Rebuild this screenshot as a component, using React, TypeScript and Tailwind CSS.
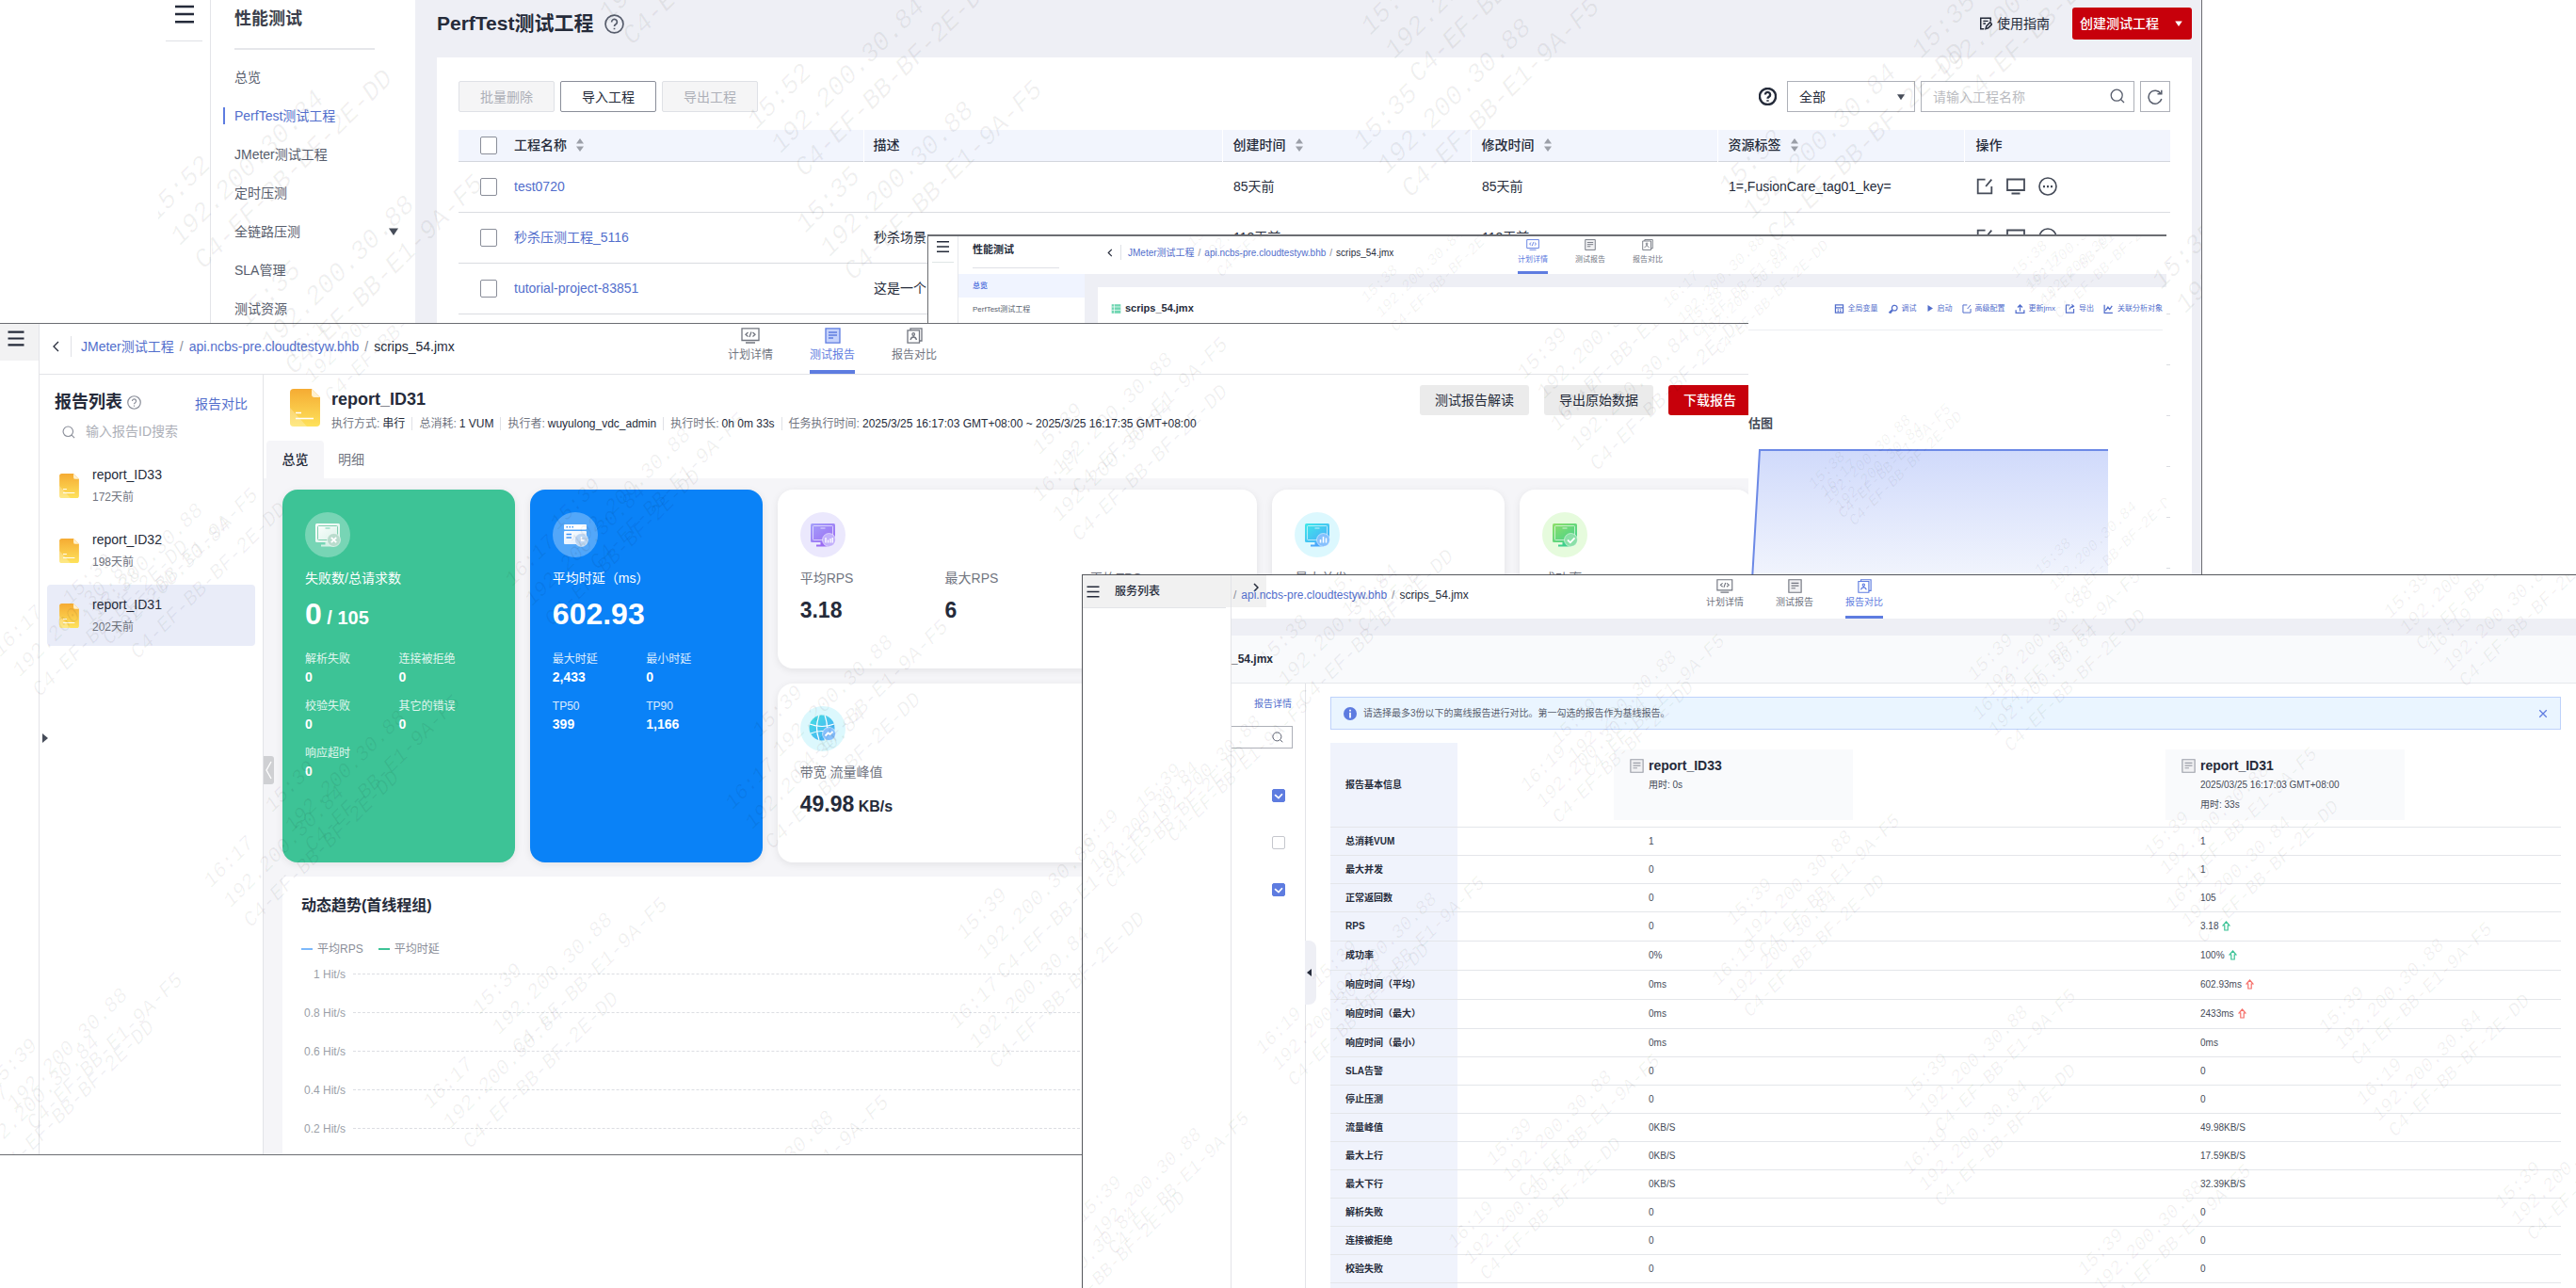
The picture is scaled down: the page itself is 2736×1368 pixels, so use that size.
import React from "react";

const MAC_A = "C4-EF-BB-E1-9A-F5";
const MAC_B = "C4-EF-BB-BF-2E-DD";
const IP_A = "192.200.30.88";
const IP_B = "192.200.30.84";

type Mark = { x: number; y: number; t: string; b?: boolean };

function Watermarks({ marks, size }: { marks: Mark[]; size: "sm" | "md" | "lg" | "xl" }) {
  const cls = {
    sm: "text-[16px] leading-[22px]",
    md: "text-[20px] leading-[24px]",
    lg: "text-[22px] leading-[30px]",
    xl: "text-[28px] leading-[36px]",
  }[size];
  return (
    <div aria-hidden="true" className="pointer-events-none absolute inset-0 z-20 overflow-hidden select-none">
      {marks.map((m, i) => (
        <div
          key={i}
          className={`absolute origin-top-left -rotate-45 font-['Liberation_Mono',monospace] whitespace-nowrap text-black/6 italic ${cls}`}
          style={{ left: m.x, top: m.y }}
        >
          <div>{m.t}</div>
          <div>{m.b ? IP_B : IP_A}</div>
          <div>{m.b ? MAC_B : MAC_A}</div>
        </div>
      ))}
    </div>
  );
}

/* ---------- icons ---------- */

function Svg({ className, children, box = "0 0 16 16", label }: { className: string; children: React.ReactNode; box?: string; label?: string }) {
  return (
    <svg viewBox={box} className={`shrink-0 ${className}`} fill="none" stroke="currentColor" strokeWidth="1.3" aria-label={label} aria-hidden={label ? undefined : true}>
      {children}
    </svg>
  );
}
const Burger = ({ className }: { className: string }) => (
  <Svg className={className}>
    <path d="M0 1.5H16M0 8H16M0 14.5H16" strokeWidth="2" />
  </Svg>
);
const Help = ({ className }: { className: string }) => (
  <Svg className={className}>
    <circle cx="8" cy="8" r="7.2" />
    <path d="M5.8 6.4a2.2 2.2 0 1 1 3.4 1.8c-.8.5-1.2.8-1.2 1.7M8 11.2v1.2" />
  </Svg>
);
const SearchI = ({ className }: { className: string }) => (
  <Svg className={className}>
    <circle cx="7.2" cy="7.2" r="6" />
    <path d="M11.5 11.5L15 15" />
  </Svg>
);
const Down = ({ className }: { className: string }) => (
  <Svg className={className} box="0 0 10 8">
    <path d="M0 0.5H10L5 8Z" fill="currentColor" stroke="none" />
  </Svg>
);
const Sort = () => (
  <Svg className="h-[14px] w-2 text-[#9b9fa8]" box="0 0 8 14">
    <path d="M4 0L8 5.5H0ZM4 14L8 8.5H0Z" fill="currentColor" stroke="none" />
  </Svg>
);
const EditI = ({ className }: { className: string }) => (
  <Svg className={className}>
    <path d="M8.5 1.5H1.5V14.5H14.5V8M9 8L14.5 1.5" strokeWidth="1.6" />
  </Svg>
);
const MonitorI = ({ className }: { className: string }) => (
  <Svg className={className} box="0 0 20 17">
    <path d="M1 1H19V12.5H1ZM5.5 16H14.5" strokeWidth="1.8" />
  </Svg>
);
const MoreI = ({ className }: { className: string }) => (
  <Svg className={className}>
    <circle cx="8" cy="8" r="7.2" />
    <path d="M4 8h1.6M7.2 8h1.6M10.4 8H12" strokeWidth="1.8" />
  </Svg>
);
const CodeI = ({ className }: { className: string }) => (
  <Svg className={className} box="0 0 20 17">
    <path d="M1 .8H19V13.5H1ZM5 16H15M7.5 5L5 7.2L7.5 9.4M12.5 5L15 7.2L12.5 9.4M11 4.5L9 10" />
  </Svg>
);
const DocI = ({ className, fill }: { className: string; fill?: boolean }) => (
  <Svg className={className} box="0 0 17 17">
    <path d="M1 .8H16V16.2H1Z" fill={fill ? "#c5d2fb" : "#f1f1f3"} />
    <path d="M4 5H13M4 8H13M4 11H9" />
  </Svg>
);
const CompareI = ({ className }: { className: string }) => (
  <Svg className={className} box="0 0 17 17">
    <path d="M4 2.8V.8H16V14H14M1 2.8H13.5V16.2H1Z" />
    <circle cx="7.2" cy="7" r="1.3" />
    <path d="M7.2 8.5V10M4 13C4.5 11 6 10 7.2 10S10 11 10.5 13" />
  </Svg>
);
const UpArrow = ({ className }: { className: string }) => (
  <Svg className={className} box="0 0 9 11">
    <path d="M4.5 1L8 5H6.2V10H2.8V5H1Z" strokeWidth="1.2" />
  </Svg>
);
const FileI = ({ className, id }: { className: string; id: string }) => (
  <Svg className={className} box="0 0 32 40">
    <defs>
      <linearGradient id={id} x1="0" y1="0" x2="0" y2="1">
        <stop offset="0" stopColor="#f5ab33" />
        <stop offset="1" stopColor="#fee25b" />
      </linearGradient>
    </defs>
    <path d="M4 0H23L32 9V36Q32 40 28 40H4Q0 40 0 36V4Q0 0 4 0Z" fill={`url(#${id})`} stroke="none" />
    <path d="M0 20L18 40H4Q0 40 0 36Z" fill="#fff" opacity=".25" stroke="none" />
    <path d="M23 0L32 9H26Q23 9 23 6Z" fill="#fff1cf" stroke="none" />
    <path d="M6 25.500H12M6 31.500H25" stroke="#fff" strokeWidth="1.500" />
  </Svg>
);

type Kind = "fail" | "time" | "rps" | "net" | "max" | "ok";
const circleBg: Record<Kind, string> = {
  fail: "bg-white/30",
  time: "bg-white/30",
  rps: "bg-[#ebe8fd]",
  net: "bg-[#dcf8fd]",
  max: "bg-[#dcf8fe]",
  ok: "bg-[#e6fbdd]",
};
const tones: Record<Kind, [string, string, string]> = {
  fail: ["#ffffff", "#d5f1e6", "#b9dccd"],
  time: ["#ffffff", "#dcecff", "#bcd6f3"],
  rps: ["#a5a0fb", "#9a6bf2", "#c2b0fb"],
  net: ["#45e0e0", "#4aa8fb", "#86c0fd"],
  max: ["#3fe8e8", "#4aa8fb", "#86c0fd"],
  ok: ["#8fe06a", "#3fcf8c", "#8be0a8"],
};
function CircleIcon({ kind }: { kind: Kind }) {
  const [a, b, c] = tones[kind];
  const id = `tone-${kind}`;
  return (
    <div className={`flex size-12 shrink-0 items-center justify-center rounded-full ${circleBg[kind]}`}>
      <svg viewBox="0 0 30 30" className="size-[30px]" fill="none" aria-hidden="true">
        <defs>
          <linearGradient id={id} x1="0" y1="0" x2="1" y2="1">
            <stop offset="0" stopColor={a} />
            <stop offset="1" stopColor={b} />
          </linearGradient>
        </defs>
        {kind === "net" && (
          <>
            <circle cx="14" cy="14" r="13.500" fill={`url(#${id})`} />
            <path d="M1 10Q14 15 27 10M2 20Q14 15 26 20M11 1Q6 14 11 27M17 1Q22 14 17 27" stroke="#fff" strokeWidth="1.200" />
          </>
        )}
        {kind === "time" && (
          <>
            <rect x="3" y="4" width="24" height="5.500" rx="1" fill="#fff" />
            <path d="M5.500 6.800h1.500M8.500 6.800H10M11.500 6.800H13" stroke="#3f95f8" strokeWidth="1.500" />
            <rect x="3" y="11" width="24" height="14" rx="1" fill={`url(#${id})`} />
            <path d="M5.500 14.500H11M5.500 18H11" stroke="#3f95f8" strokeWidth="1.300" />
          </>
        )}
        {kind !== "net" && kind !== "time" && (
          <>
            <rect x="2" y="3" width="26" height="20" rx="1.500" fill={`url(#${id})`} />
            <rect x="4.500" y="5.500" width="21" height="15" rx="1" stroke={kind === "fail" ? "#7fcfae" : "#fff"} strokeOpacity={kind === "fail" ? 1 : 0.6} />
            <path d="M12.500 8H17.500" stroke={kind === "fail" ? "#3dc396" : "#fff"} opacity=".7" />
            <path d="M12.500 23h5v2.500H22v2H8v-2h4.500Z" fill={b} />
          </>
        )}
        <circle cx="21.500" cy="20.500" r="7" fill={c} stroke="#fff" strokeOpacity=".5" />
        {kind === "fail" && <path d="M18.800 17.800l5.400 5.400M24.200 17.800l-5.400 5.400" stroke="#fff" strokeWidth="1.800" />}
        {kind === "time" && <path d="M21.500 17v4h3" stroke="#fff" strokeWidth="1.600" />}
        {kind === "rps" && <path d="M18 18v5.500M20.500 20.500v3M23 19v4.500M25.200 18v5.500" stroke="#fff" strokeWidth="1.300" />}
        {kind === "max" && <path d="M18.500 20v3.500M21.500 17v6.500M24.500 18.500v5" stroke="#fff" strokeWidth="1.500" />}
        {kind === "net" && <path d="M17.500 22.500l3-3 2 1.500 3-3" stroke="#fff" strokeWidth="1.800" />}
        {kind === "ok" && <path d="M18 20.500l2.800 2.800 4.700-5" stroke="#fff" strokeWidth="1.800" />}
      </svg>
    </div>
  );
}

/* ---------- shared: breadcrumb and centre tabs ---------- */

function Crumbs({ className, first = true }: { className: string; first?: boolean }) {
  return (
    <nav aria-label="面包屑" className={`flex items-center whitespace-nowrap text-[#252b3a] ${className}`}>
      {first && <a href="#jmeter" className="text-[#526ecc]">JMeter测试工程</a>}
      <span className="text-[#8a8e99]">/</span>
      <a href="#api" className="text-[#526ecc]">api.ncbs-pre.cloudtestyw.bhb</a>
      <span className="text-[#8a8e99]">/</span>
      <span>scrips_54.jmx</span>
    </nav>
  );
}

function PlanTabs({ active, size }: { active: number; size: "s" | "m" | "l" }) {
  const list = ["计划详情", "测试报告", "报告对比"];
  const s = {
    s: { nav: "gap-[29px]", text: "w-8 text-[8px] leading-[14px]", icon: "h-3", pad: "pt-[3px] gap-[3px]", bar: "h-[3px]" },
    m: { nav: "gap-[34px]", text: "w-10 text-[10px] leading-[16px]", icon: "h-[15px]", pad: "pt-1 gap-[2px]", bar: "h-[3px]" },
    l: { nav: "gap-[39px]", text: "w-12 text-xs leading-[18px]", icon: "h-[17px]", pad: "pt-1 gap-[3px]", bar: "h-[4px]" },
  }[size];
  return (
    <div role="tablist" className={`flex self-stretch ${s.nav}`}>
      {list.map((t, i) => {
        const on = i === active;
        return (
          <button key={t} role="tab" aria-selected={on} className={`flex flex-col items-center whitespace-nowrap ${s.text} ${s.pad} ${on ? "text-[#5e7ce0]" : "text-[#71757f]"}`}>
            {i === 0 && <CodeI className={s.icon} />}
            {i === 1 && <DocI className={s.icon} fill={on} />}
            {i === 2 && <CompareI className={s.icon} />}
            <span>{t}</span>
            <span className={`mt-auto w-full ${s.bar} ${on ? "bg-[#5e7ce0]" : ""}`} />
          </button>
        );
      })}
    </div>
  );
}

/* ---------- project list window ---------- */

const sideItems = ["总览", "PerfTest测试工程", "JMeter测试工程", "定时压测", "全链路压测", "SLA管理", "测试资源"];
const projects = [
  { name: "test0720", desc: "", t: "85天前", tag: "1=,FusionCare_tag01_key=" },
  { name: "秒杀压测工程_5116", desc: "秒杀场景", t: "113天前", tag: "" },
  { name: "tutorial-project-83851", desc: "这是一个", t: "113天前", tag: "" },
  null, null, null, null, null,
];

function ProjectWindow() {
  return (
    <section className="absolute top-0 right-[397px] left-[168px] flex overflow-hidden border-r border-[#6b6d72] bg-white text-sm text-[#252b3a]">
      <div className="w-14 shrink-0 border-r border-[#e3e4e8]">
        <div className="mx-2 flex h-11 items-start justify-center border-b border-[#dfe1e6] pt-[5px]">
          <button aria-label="菜单"><Burger className="h-5 w-5 text-[#252b3a]" /></button>
        </div>
      </div>
      <aside className="w-[217px] shrink-0 pl-[25px]">
        <h2 className="mr-[43px] flex h-[53px] items-start border-b-2 border-[#e6e7eb] pt-[6px] text-lg font-bold text-[#3b3f4b]">性能测试</h2>
        <ul className="pt-2">
          {sideItems.map((t, i) => (
            <li key={t} className="relative flex h-[41px] items-center justify-between pr-[18px]">
              {i === 1 && <span className="absolute -left-3 h-[18px] w-[2px] bg-[#5e7ce0]" />}
              <a href="#nav" className={i === 1 ? "text-[#526ecc]" : "text-[#575d6c]"}>{t}</a>
              {i === 4 && <Down className="h-2 w-[10px] text-[#464c59]" />}
            </li>
          ))}
        </ul>
      </aside>
      <main className="flex-1 bg-[#eeeff5] pr-[10px] pl-[23px]">
        <header className="flex h-[61px] items-start justify-between pt-2">
          <h1 className="flex h-[34px] items-center gap-3 text-[21px] font-bold">
            PerfTest测试工程 <Help className="size-[21px] text-[#575d6c]" />
          </h1>
          <div className="flex items-center gap-6">
            <a href="#guide" className="flex items-center gap-[5px]">
              <Svg className="size-[14px]"><path d="M14 5V1.500H2V14.500H6M5 5H11M5 8H8M8 14.500L9 11L13.500 6.500L15.500 9L11 13.500Z" strokeWidth="1.700" /></Svg>
              使用指南
            </a>
            <button className="flex h-[34px] w-[127px] items-center justify-between rounded-[3px] bg-[#c7000b] pr-[10px] pl-2 font-medium text-white">
              创建测试工程 <Down className="h-[6px] w-2" />
            </button>
          </div>
        </header>
        <div className="h-[640px] bg-white px-[23px] pt-[25px]">
          <div className="flex items-center justify-between">
            <div className="flex gap-[6px]">
              <button disabled className="h-[33px] w-[102px] rounded-[2px] border border-[#dfe1e6] bg-[#f5f5f6] text-[#adb0b8]">批量删除</button>
              <button className="h-[33px] w-[102px] rounded-[2px] border border-[#8a8e99] bg-white">导入工程</button>
              <button disabled className="h-[33px] w-[102px] rounded-[2px] border border-[#dfe1e6] bg-[#f5f5f6] text-[#adb0b8]">导出工程</button>
            </div>
            <div className="flex items-center gap-[6px]">
              <Help className="mr-[5px] size-[19px] stroke-[2px]" />
              <div className="relative">
                <select aria-label="筛选" className="h-[33px] w-[136px] appearance-none border border-[#adb0b8] bg-white pl-3">
                  <option>全部</option>
                </select>
                <Down className="pointer-events-none absolute top-[13px] right-[11px] h-2 w-2 text-[#464c59]" />
              </div>
              <div className="relative">
                <input aria-label="请输入工程名称" placeholder="请输入工程名称" className="h-[33px] w-[227px] border border-[#adb0b8] bg-white pl-3 placeholder:text-[#babbc0]" />
                <SearchI className="absolute top-2 right-[10px] size-4 text-[#575d6c]" />
              </div>
              <button aria-label="刷新" className="flex h-[33px] w-8 items-center justify-center border border-[#adb0b8]">
                <Svg className="size-4 text-[#575d6c]"><path d="M14 4.500A7 7 0 1 0 14.800 10M14.800 .8V4.800H10.500" strokeWidth="1.500" /></Svg>
              </button>
            </div>
          </div>
          <table className="mt-[19px] w-full table-fixed text-left">
            <colgroup>
              <col className="w-[59px]" />
              <col className="w-[371px]" />
              <col />
              <col className="w-[264px]" />
              <col className="w-[262px]" />
              <col className="w-[262px]" />
              <col className="w-[219px]" />
            </colgroup>
            <thead>
              <tr className="h-[33px] border-b border-[#d3d6dd] bg-[#f2f5fd]">
                <th className="pl-[23px]"><input type="checkbox" aria-label="全选" className="block h-[19px] w-[18px] appearance-none rounded-[2px] border border-[#8a8e99] bg-white" /></th>
                <th className="font-medium"><span className="flex items-center gap-[10px]">工程名称 <Sort /></span></th>
                <th className="border-l border-white pl-[10px] font-medium">描述</th>
                <th className="border-l border-white pl-[11px] font-medium"><span className="flex items-center gap-[10px]">创建时间 <Sort /></span></th>
                <th className="border-l border-white pl-[11px] font-medium"><span className="flex items-center gap-[10px]">修改时间 <Sort /></span></th>
                <th className="border-l border-white pl-[11px] font-medium"><span className="flex items-center gap-[10px]">资源标签 <Sort /></span></th>
                <th className="border-l border-white pl-3 font-medium">操作</th>
              </tr>
            </thead>
            <tbody>
              {projects.map((p, i) => (
                <tr key={i} className="h-[54px] border-b border-[#dadce1]">
                  {p ? (
                    <>
                      <td className="pl-[23px]"><input type="checkbox" aria-label={p.name} className="block h-[19px] w-[18px] appearance-none rounded-[2px] border border-[#8a8e99]" /></td>
                      <td><a href="#project" className="text-[#526ecc]">{p.name}</a></td>
                      <td className="pl-[11px]">{p.desc}</td>
                      <td className="pl-3">{p.t}</td>
                      <td className="pl-3">{p.t}</td>
                      <td className="pl-3">{p.tag}</td>
                      <td className="pl-[13px] text-[#464c59]">
                        <span className="flex items-center gap-[14px]">
                          <button aria-label="编辑"><EditI className="h-[18px] w-[18px]" /></button>
                          <button aria-label="调试"><MonitorI className="h-[18px] w-5" /></button>
                          <button aria-label="更多"><MoreI className="size-5" /></button>
                        </span>
                      </td>
                    </>
                  ) : (
                    <td colSpan={7} />
                  )}
                </tr>
              ))}
            </tbody>
          </table>
        </div>
      </main>
      <Watermarks
        size="xl"
        marks={[
          { x: -20, y: 218, t: "15:52", b: true },
          { x: 76, y: 330, t: "15:35" },
          { x: 435, y: -20, t: "15:52", b: true },
          { x: 618, y: 120, t: "15:52", b: true },
          { x: 670, y: 230, t: "15:35" },
          { x: 1270, y: 20, t: "15:35" },
          { x: 1262, y: 142, t: "15:35" },
          { x: 1855, y: 45, t: "15:35" },
          { x: 1650, y: 190, t: "15:52", b: true },
          { x: 2110, y: 290, t: "15:35" },
        ]}
      />
    </section>
  );
}

/* ---------- plan window ---------- */

function PlanWindow() {
  const t = "h-[10px] w-[11px]";
  const tools: [string, React.ReactNode][] = [
    ["全局变量", <Svg key="a" className={t}><path d="M1.500 1.500H14.500V14.500H1.500ZM1.500 6H14.500M5 9.500H7M9 9.500H11M5 12H7M9 12H11" strokeWidth="2" /></Svg>],
    ["调试", <Svg key="b" className={t}><path d="M2 14L7 9A4.500 4.500 0 1 1 10 11L7 11L4 15Z" strokeWidth="2" /></Svg>],
    ["启动", <Svg key="c" className="h-[9px] w-2"><path d="M3 1V15L14 8Z" fill="currentColor" stroke="none" /></Svg>],
    ["高级配置", <EditI key="d" className="size-[10px]" />],
    ["更新jmx", <Svg key="e" className={t}><path d="M8 12V2M4 5.500L8 1.500L12 5.500M1 10V15H15V10" strokeWidth="2" /></Svg>],
    ["导出", <Svg key="f" className={t}><path d="M8 1.500H1.500V14.500H14.500V8M7 9Q9 4 14 3.500M11 .8L14.500 3.500L11 6" strokeWidth="1.800" /></Svg>],
    ["关联分析对象", <Svg key="g" className={t}><path d="M1 1V15H15M3 11L7 5L10 9L14 3" strokeWidth="2" /></Svg>],
  ];
  return (
    <section className="absolute top-[249px] right-[435px] left-[985px] flex h-[400px] overflow-hidden border-t-2 border-l border-[#6b6d72] bg-white text-[#252b3a]">
      <div className="w-8 shrink-0 border-r border-[#e6e8ec]">
        <div className="mx-1 flex h-7 justify-center border-b border-[#dfe6e6] pt-1">
          <button aria-label="菜单" className="self-start"><Burger className="h-[14px] w-[13px]" /></button>
        </div>
      </div>
      <aside className="w-[134px] shrink-0 text-[8px]">
        <h2 className="mr-[27px] ml-[15px] flex h-[34px] items-start border-b border-[#dfe1e6] pt-[6px] text-[11px] leading-4 font-bold">性能测试</h2>
        <a href="#all" className="mt-[6px] flex h-[25px] items-center bg-[#f0f4ff] pl-[15px] font-bold text-[#5e7ce0]">总览</a>
        <a href="#perf" className="flex h-[25px] items-center pl-[15px] text-[#575d6c]">PerfTest测试工程</a>
      </aside>
      <div className="flex min-w-0 flex-1 flex-col bg-[#eeeff5]">
        <header className="flex h-[40px] bg-white">
          <div className="flex h-[34px] w-[460px] shrink-0 items-center pl-6">
            <Svg className="h-[9px] w-[6px]" box="0 0 6 10"><path d="M5 1L1 5L5 9" /></Svg>
            <span className="mr-[7px] ml-2 h-4 w-px bg-[#dfe1e6]" />
            <Crumbs className="gap-1 text-[10px]" />
          </div>
          <PlanTabs active={0} size="s" />
        </header>
        <div className="mt-[14px] ml-[14px] flex-1 bg-white">
          <div className="mr-1 flex h-[46px] items-center justify-between border-b border-[#eceef2] pl-[14px]">
            <h2 className="flex items-center gap-1 text-[11px] font-bold">
              <Svg className="h-3 w-[11px]"><path d="M1 1H15V15H1Z" fill="#6fd6b2" stroke="none" /><path d="M1 5H15M1 10H15M5 1V15" stroke="#fff" strokeWidth="1" /></Svg>
              scrips_54.jmx
            </h2>
            <div className="flex gap-[10px] text-[8px] text-[#526ecc]">
              {tools.map(([n, ic]) => (
                <button key={n} className="flex items-center gap-1 whitespace-nowrap">{ic}{n}</button>
              ))}
            </div>
          </div>
          <figure className="ml-auto w-[444px] pt-[90px]">
            <figcaption className="h-[18px] text-[13px] leading-[18px] font-bold text-[#464c59]">估图</figcaption>
            <svg viewBox="0 0 444 140" preserveAspectRatio="none" className="mt-[17px] h-[140px] w-full" fill="none" aria-label="压力预估图">
              <defs>
                <linearGradient id="load" x1="0" y1="0" x2="0" y2="1">
                  <stop offset="0" stopColor="#d0dafb" />
                  <stop offset="1" stopColor="#f2f5fd" />
                </linearGradient>
              </defs>
              <path d="M4 140L12 2H382V140Z" fill="url(#load)" />
              <path d="M4 140L12 2H382" stroke="#6c89e6" strokeWidth="2" />
            </svg>
          </figure>
        </div>
      </div>
      <Watermarks
        size="sm"
        marks={[
          { x: 270, y: 2, t: "15:38", b: true },
          { x: 455, y: 60, t: "15:38", b: true },
          { x: 775, y: 66, t: "16:17" },
          { x: 800, y: 84, t: "15:38", b: true },
          { x: 1145, y: 34, t: "15:38" },
          { x: 1160, y: 46, t: "16:17", b: true },
          { x: 930, y: 258, t: "15:38" },
          { x: 942, y: 266, t: "16:17", b: true },
          { x: 1170, y: 350, t: "15:38", b: true },
        ]}
      />
    </section>
  );
}

/* ---------- report window ---------- */

function Stat({ k, v }: { k: string; v: string }) {
  return (
    <div>
      <dt className="text-xs leading-5 text-white/85">{k}</dt>
      <dd className="text-sm leading-[18px] font-bold">{v}</dd>
    </div>
  );
}
function Metric({ k, v, unit }: { k: string; v: string; unit?: string }) {
  return (
    <div className="whitespace-nowrap">
      <dt className="text-sm leading-5 text-[#71757f]">{k}</dt>
      <dd className="mt-2 text-[23px] leading-8 font-bold">{v}{unit && <span className="text-base"> {unit}</span>}</dd>
    </div>
  );
}

const reports = [
  ["report_ID33", "172天前"],
  ["report_ID32", "198天前"],
  ["report_ID31", "202天前"],
];
const meta = [
  ["执行方式", "串行"],
  ["总消耗", "1 VUM"],
  ["执行者", "wuyulong_vdc_admin"],
  ["执行时长", "0h 0m 33s"],
  ["任务执行时间", "2025/3/25 16:17:03 GMT+08:00 ~ 2025/3/25 16:17:35 GMT+08:00"],
];

function ReportWindow() {
  const card = "rounded-2xl p-6 shadow-[0_2px_8px_rgba(0,0,0,0.08)]";
  return (
    <section className="absolute top-[343px] right-[879px] bottom-[141px] left-0 flex overflow-hidden border-y border-[#6b6d72] bg-white text-[#252b3a]">
      <div className="relative w-[42px] shrink-0 border-r border-[#e3e4e8]">
        <div className="flex h-[39px] items-start bg-[#f2f2f3] pt-[7px] pl-2">
          <button aria-label="菜单"><Burger className="h-[17px] w-[18px]" /></button>
        </div>
      </div>
      <div className="flex min-w-0 flex-1 flex-col">
        <header className="flex h-[54px] shrink-0 border-b border-[#e3e4e8]">
          <div className="flex h-12 w-[731px] shrink-0 items-center pl-[14px]">
            <Svg className="h-3 w-[7px]" box="0 0 7 12"><path d="M6 1L1 6L6 11" /></Svg>
            <span className="mr-[10px] ml-3 h-[22px] w-px bg-[#dfe1e6]" />
            <Crumbs className="gap-[6px] text-sm" />
          </div>
          <PlanTabs active={1} size="l" />
        </header>
        <div className="flex min-h-0 flex-1">
          <aside className="relative w-[238px] shrink-0 border-r border-[#e3e4e8] px-2 pt-[17px]">
            <div className="flex items-center justify-between pr-2 pl-2">
              <h2 className="flex items-center gap-[5px] text-lg leading-6 font-bold">报告列表 <Help className="size-[15px] text-[#8a8e99]" /></h2>
              <a href="#compare" className="pt-[3px] text-sm text-[#526ecc]">报告对比</a>
            </div>
            <div className="relative mt-[7px]">
              <SearchI className="absolute top-[6px] left-4 size-[14px] text-[#8a8e99]" />
              <input aria-label="输入报告ID搜索" placeholder="输入报告ID搜索" className="h-6 w-full pl-[41px] text-sm placeholder:text-[#adb0b8]" />
            </div>
            <ul className="mt-[13px]">
              {reports.map(([n, d], i) => (
                <li key={n} className={`mb-1 flex h-[65px] items-center gap-[14px] rounded-[4px] pl-[13px] ${i === 2 ? "bg-[#e9ecf8]" : ""}`}>
                  <FileI className="h-[26px] w-[21px]" id={`file-${i}`} />
                  <div>
                    <a href="#report" className="block text-sm leading-6">{n}</a>
                    <span className="block text-xs leading-6 text-[#71757f]">{d}</span>
                  </div>
                </li>
              ))}
            </ul>
            <span className="absolute top-[381px] left-[3px] border-y-[5px] border-l-[6px] border-y-transparent border-l-[#464c59]" />
          </aside>
          <main className="relative -mr-1 flex min-w-0 flex-1 flex-col bg-[#f5f5f8]">
            <div className="flex h-[70px] shrink-0 items-center bg-white pr-px pl-7">
              <FileI className="h-10 w-8" id="file-main" />
              <div className="ml-3 pt-[6px]">
                <h1 className="text-lg leading-7 font-bold">report_ID31</h1>
                <dl className="flex text-xs leading-6 whitespace-nowrap">
                  {meta.map(([k, v], i) => (
                    <div key={k} className="flex items-center">
                      {i > 0 && <span className="mx-[7px] h-[14px] w-px bg-[#dfe1e6]" />}
                      <dt className="text-[#71757f]">{k}:</dt>
                      <dd className="ml-[3px]">{v}</dd>
                    </div>
                  ))}
                </dl>
              </div>
              <div className="mb-4 ml-auto flex gap-4 text-sm whitespace-nowrap">
                <button className="h-8 rounded-[3px] bg-[#ebebeb] px-4">测试报告解读</button>
                <button className="h-8 rounded-[3px] bg-[#ebebeb] px-4">导出原始数据</button>
                <button className="h-8 rounded-[3px] bg-[#c7000b] px-4 font-medium text-white">下载报告</button>
              </div>
            </div>
            <div role="tablist" className="flex h-10 shrink-0 bg-white pl-[3px] text-sm">
              <button role="tab" aria-selected="true" className="w-[61px] rounded-t-[4px] bg-[#f5f5f8] font-medium">总览</button>
              <button role="tab" aria-selected="false" className="w-[58px] text-[#71757f]">明细</button>
            </div>
            <div className="grid grid-cols-6 grid-rows-[190px_190px] gap-4 pt-3 pl-5">
              <div className={`row-span-2 bg-[#3dc396] text-white ${card}`}>
                <CircleIcon kind="fail" />
                <h3 className="mt-3 text-sm leading-5">失败数/总请求数</h3>
                <p className="mt-2 text-[32px] leading-10 font-bold">0<span className="text-xl"> / 105</span></p>
                <dl className="mt-[18px] grid grid-cols-2 gap-y-3">
                  <Stat k="解析失败" v="0" />
                  <Stat k="连接被拒绝" v="0" />
                  <Stat k="校验失败" v="0" />
                  <Stat k="其它的错误" v="0" />
                  <Stat k="响应超时" v="0" />
                </dl>
              </div>
              <div className={`row-span-2 bg-[#0a82f7] text-white ${card}`}>
                <CircleIcon kind="time" />
                <h3 className="mt-3 text-sm leading-5">平均时延（ms）</h3>
                <p className="mt-2 text-[32px] leading-10 font-bold">602.93</p>
                <dl className="mt-[18px] grid grid-cols-2 gap-y-3">
                  <Stat k="最大时延" v="2,433" />
                  <Stat k="最小时延" v="0" />
                  <Stat k="TP50" v="399" />
                  <Stat k="TP90" v="1,166" />
                </dl>
              </div>
              <div className={`col-span-2 bg-white ${card}`}>
                <CircleIcon kind="rps" />
                <dl className="mt-3 grid grid-cols-3">
                  <Metric k="平均RPS" v="3.18" />
                  <Metric k="最大RPS" v="6" />
                  <Metric k="平均TPS" v="3.18" />
                </dl>
              </div>
              <div className={`bg-white ${card}`}>
                <CircleIcon kind="max" />
                <dl className="mt-3"><Metric k="最大并发" v="1" /></dl>
              </div>
              <div className={`bg-white ${card}`}>
                <CircleIcon kind="ok" />
                <dl className="mt-3"><Metric k="成功率" v="100%" /></dl>
              </div>
              <div className={`col-span-2 bg-white ${card}`}>
                <CircleIcon kind="net" />
                <dl className="mt-3"><Metric k="带宽 流量峰值" v="49.98" unit="KB/s" /></dl>
              </div>
            </div>
            <div className="mt-[15px] ml-5 flex-1 bg-white pt-[19px] pl-5">
              <h3 className="text-base leading-6 font-bold">动态趋势(首线程组)</h3>
              <div className="mt-7 flex text-xs leading-3 text-[#8a8e99]">
                <span className="mr-[5px] h-[2px] w-3 self-center bg-[#7cb8fb]" />平均RPS
                <span className="mr-[5px] ml-4 h-[2px] w-3 self-center bg-[#3dc396]" />平均时延
              </div>
              <div className="text-xs text-[#9b9fa8]">
                {["1 Hit/s", "0.8 Hit/s", "0.6 Hit/s", "0.4 Hit/s", "0.2 Hit/s"].map((t) => (
                  <div key={t} className="flex h-[41px] items-center">
                    <span className="w-[47px] text-right whitespace-nowrap">{t}</span>
                    <span className="ml-2 flex-1 border-t border-dashed border-[#dcdee3]" />
                  </div>
                ))}
              </div>
            </div>
            <button aria-label="收起" className="absolute top-[405px] left-0 flex h-[30px] w-[11px] items-center justify-center rounded-r-[3px] bg-[#cfd0d3] text-white">
              <Svg className="h-5 w-[7px]" box="0 0 7 20"><path d="M6 1L1 10L6 19" /></Svg>
            </button>
          </main>
        </div>
      </div>
      <Watermarks
        size="lg"
        marks={[
          { x: -14, y: 340, t: "16:17", b: true },
          { x: 60, y: 285, t: "15:39" },
          { x: 90, y: 300, t: "15:38", b: true },
          { x: 296, y: 28, t: "16:17", b: true },
          { x: 530, y: 265, t: "16:17", b: true },
          { x: 578, y: 205, t: "15:39" },
          { x: 275, y: 505, t: "15:39" },
          { x: 793, y: 425, t: "15:39" },
          { x: 764, y: 502, t: "16:17", b: true },
          { x: 1090, y: 125, t: "15:39" },
          { x: 1090, y: 175, t: "16:17", b: true },
          { x: 1605, y: 45, t: "15:39" },
          { x: 1640, y: 100, t: "16:17", b: true },
          { x: 1330, y: 350, t: "15:38", b: true },
          { x: 210, y: 585, t: "16:17", b: true },
          { x: 495, y: 720, t: "15:39" },
          { x: 443, y: 820, t: "16:17", b: true },
          { x: 1010, y: 640, t: "15:39" },
          { x: 1002, y: 735, t: "16:17", b: true },
          { x: -20, y: 800, t: "15:39" },
          { x: -50, y: 850, t: "16:17", b: true },
          { x: 730, y: 930, t: "15:39" },
        ]}
      />
    </section>
  );
}

/* ---------- comparison window ---------- */

type Row = { k: string; a: string; b: string; up?: "good" | "bad"; tall?: boolean };
const rows: Row[] = [
  { k: "总消耗VUM", a: "1", b: "1" },
  { k: "最大并发", a: "0", b: "1" },
  { k: "正常返回数", a: "0", b: "105" },
  { k: "RPS", a: "0", b: "3.18", up: "good", tall: true },
  { k: "成功率", a: "0%", b: "100%", up: "good", tall: true },
  { k: "响应时间（平均）", a: "0ms", b: "602.93ms", up: "bad", tall: true },
  { k: "响应时间（最大）", a: "0ms", b: "2433ms", up: "bad", tall: true },
  { k: "响应时间（最小）", a: "0ms", b: "0ms" },
  { k: "SLA告警", a: "0", b: "0" },
  { k: "停止压测", a: "0", b: "0" },
  { k: "流量峰值", a: "0KB/S", b: "49.98KB/S" },
  { k: "最大上行", a: "0KB/S", b: "17.59KB/S" },
  { k: "最大下行", a: "0KB/S", b: "32.39KB/S" },
  { k: "解析失败", a: "0", b: "0" },
  { k: "连接被拒绝", a: "0", b: "0" },
  { k: "校验失败", a: "0", b: "0" },
  { k: "", a: "", b: "" },
];

function ReportHead({ name, lines }: { name: string; lines: string[] }) {
  return (
    <div className="mx-auto flex h-[75px] w-[254px] gap-[5px] bg-[#f9fafc] pt-[7px] pl-[17px] text-left font-normal">
      <DocI className="mt-[3px] size-[15px] text-[#9b9fa8]" />
      <div>
        <div className="text-sm leading-5 font-bold">{name}</div>
        {lines.map((l) => (
          <div key={l} className="text-[10px] leading-[21px] text-[#464c59]">{l}</div>
        ))}
      </div>
    </div>
  );
}

function Tick({ checked, label }: { checked: boolean; label: string }) {
  return (
    <span className="relative size-[14px]">
      <input
        type="checkbox"
        aria-label={label}
        defaultChecked={checked}
        className="block size-[14px] appearance-none rounded-[2px] border border-[#c5c7cd] bg-white checked:border-[#5e7ce0] checked:bg-[#5e7ce0]"
      />
      {checked && <Svg className="pointer-events-none absolute inset-0 size-[14px] text-white"><path d="M3.500 7L8 11L12.500 6" strokeWidth="2" /></Svg>}
    </span>
  );
}

function CompareWindow() {
  return (
    <section className="absolute top-[610px] right-0 bottom-0 left-[1149px] flex overflow-hidden border-t border-l border-[#55575c] bg-white text-[#252b3a]">
      <div className="relative w-[158px] shrink-0 border-r border-[#e3e4e8]">
        <div className="flex h-[34px] items-center bg-[#f1f1f1] pl-[3px] text-xs font-medium">
          <button aria-label="菜单"><Burger className="h-[13px] w-4" /></button>
          <span className="ml-[15px] pb-px">服务列表</span>
        </div>
        <div className="mr-[5px] border-t border-[#e3e4e8]" />
        <span className="absolute top-0 left-[158px] flex h-[34px] w-[37px] items-center bg-[#f1f1f1] pb-2 pl-[23px]">
          <Svg className="h-[10px] w-[6px]" box="0 0 6 10"><path d="M1 1L5 5L1 9" strokeWidth="1.500" /></Svg>
        </span>
      </div>
      <div className="z-10 flex min-w-0 flex-1 flex-col">
        <header className="flex h-[46px] shrink-0">
          <div className="flex h-[42px] w-[504px] shrink-0 items-center pl-[2px]">
            <Crumbs className="gap-[5px] text-xs" first={false} />
          </div>
          <PlanTabs active={2} size="m" />
        </header>
        <div className="h-[18px] shrink-0 bg-[#eeeff5]" />
        <h1 className="flex h-[51px] shrink-0 items-center border-b border-[#e6e8ec] bg-[#f9fafc] text-xs font-bold">_54.jmx</h1>
        <div className="flex min-h-0 flex-1">
          <aside className="relative flex w-[79px] shrink-0 flex-col items-end border-r border-[#e3e4e8] pt-3 text-[10px]">
            <a href="#detail" className="mr-[14px] h-5 leading-5 text-[#526ecc]">报告详情</a>
            <div className="relative mt-[13px] mr-[13px] w-[65px]">
              <input aria-label="搜索报告" className="h-6 w-full border border-l-0 border-[#adb0b8]" />
              <SearchI className="absolute top-[6px] right-[10px] size-3 text-[#575d6c]" />
            </div>
            <div className="mt-[43px] mr-[21px] flex flex-col gap-9">
              <Tick checked label="report_ID33" />
              <Tick checked={false} label="report_ID32" />
              <Tick checked label="report_ID31" />
            </div>
            <button aria-label="收起" className="absolute top-[273px] -right-3 flex h-[68px] w-3 items-center rounded-r-lg bg-[#eeeff5] pl-[2px]">
              <span className="border-y-[4px] border-r-[5px] border-y-transparent border-r-[#252b3a]" />
            </button>
          </aside>
          <main className="min-w-0 flex-1 pt-[14px] pr-4 pl-[26px] text-[10px]">
            <div role="alert" className="flex h-[35px] items-center border border-[#bed2fb] bg-[#eaf5ff] pr-[13px] pl-[13px] text-[#575d6c]">
              <Svg className="size-[14px]"><circle cx="8" cy="8" r="8" fill="#5e7ce0" stroke="none" /><path d="M8 3V5M8 6.500V13" stroke="#fff" strokeWidth="2" /></Svg>
              <span className="ml-[7px]">请选择最多3份以下的离线报告进行对比。第一勾选的报告作为基线报告。</span>
              <button aria-label="关闭" className="ml-auto text-[#5e7ce0]"><Svg className="size-[10px]"><path d="M2 2L14 14M14 2L2 14" strokeWidth="2" /></Svg></button>
            </div>
            <table className="mt-[14px] w-full table-fixed text-left">
              <colgroup>
                <col className="w-[135px]" />
                <col />
                <col />
              </colgroup>
              <thead>
                <tr className="h-[89px] border-b border-[#e4e6ea]">
                  <th className="bg-[#f0f3fc] pl-4 font-bold">报告基本信息</th>
                  <th><ReportHead name="report_ID33" lines={["用时: 0s"]} /></th>
                  <th><ReportHead name="report_ID31" lines={["2025/03/25 16:17:03 GMT+08:00", "用时: 33s"]} /></th>
                </tr>
              </thead>
              <tbody>
                {rows.map((r, i) => (
                  <tr key={i} className={`border-b border-[#e4e6ea] ${r.tall ? "h-[31px]" : "h-[30px]"}`}>
                    <th scope="row" className="bg-[#f0f3fc] pl-4 font-bold">{r.k}</th>
                    <td className="text-[#464c59]"><div className="mx-auto w-[254px] pl-[37px]">{r.a}</div></td>
                    <td className="text-[#464c59]">
                      <div className="mx-auto flex w-[254px] items-center gap-1 pl-[37px]">
                        {r.b}
                        {r.up && <UpArrow className={`h-[11px] w-[9px] ${r.up === "good" ? "text-[#3ac295]" : "text-[#f66f6a]"}`} />}
                      </div>
                    </td>
                  </tr>
                ))}
              </tbody>
            </table>
          </main>
        </div>
      </div>
      <Watermarks
        size="md"
        marks={[
          { x: 935, y: 100, t: "15:39" },
          { x: 1377, y: 34, t: "15:39" },
          { x: 1122, y: 289, t: "15:39" },
          { x: 866, y: 546, t: "15:39" },
          { x: 1308, y: 475, t: "15:39" },
          { x: 1052, y: 732, t: "15:39" },
          { x: 1495, y: 661, t: "15:39" },
          { x: 493, y: 169, t: "15:39" },
          { x: 679, y: 360, t: "15:39" },
          { x: 51, y: 238, t: "15:39" },
          { x: 238, y: 426, t: "15:39" },
          { x: 424, y: 615, t: "15:39" },
          { x: -12, y: 676, t: "15:39" },
          { x: 253, y: 15, t: "15:39" },
          { x: 940, y: 142, t: "16:19", b: true },
          { x: 1423, y: 73, t: "16:19", b: true },
          { x: 1145, y: 345, t: "16:19", b: true },
          { x: 866, y: 625, t: "16:19", b: true },
          { x: 1348, y: 551, t: "16:19", b: true },
          { x: 460, y: 218, t: "16:19", b: true },
          { x: 663, y: 424, t: "16:19", b: true },
          { x: 179, y: 497, t: "16:19", b: true },
          { x: 383, y: 703, t: "16:19", b: true },
          { x: -15, y: 287, t: "16:19", b: true },
          { x: -80, y: 760, t: "16:19", b: true },
        ]}
      />
    </section>
  );
}

export default function App() {
  return (
    <div className="relative min-h-screen w-full overflow-hidden bg-white font-['Liberation_Sans','Noto_Sans_CJK_SC',sans-serif]">
      <ProjectWindow />
      <PlanWindow />
      <ReportWindow />
      <CompareWindow />
    </div>
  );
}
